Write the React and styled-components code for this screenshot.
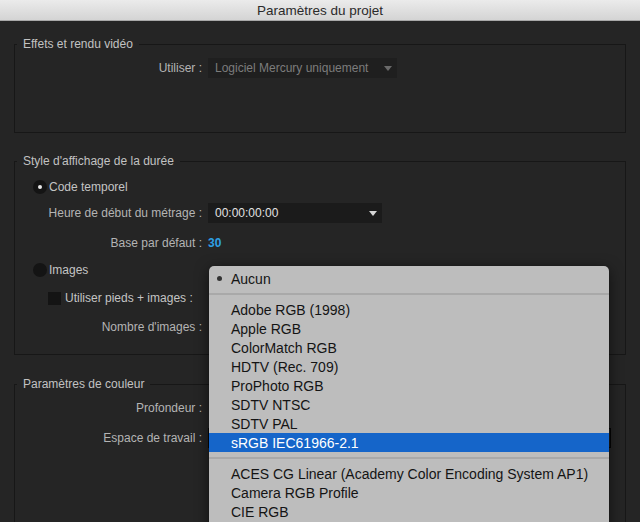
import React from "react";
import styled, { createGlobalStyle } from "styled-components";

const Global = createGlobalStyle`
  html, body { margin: 0; padding: 0; background: #252525; }
  body { font-family: "Liberation Sans", Arial, sans-serif; }
`;

const Page = styled.div`
  position: relative;
  width: 640px;
  height: 522px;
  overflow: hidden;
  background: #252525;
  display: flex;
  flex-direction: column;
`;

const TitleBar = styled.div`
  height: 20px;
  flex: none;
  border-bottom: 1px solid #a8a8a8;
  background: linear-gradient(#ebebeb, #d4d4d4);
  color: #2a2a2a;
  font-size: 13.5px;
  line-height: 21px;
  text-align: center;
`;

const Content = styled.div`
  padding: 16px 14px 0 14px;
  display: flex;
  flex-direction: column;
`;

const Group = styled.fieldset`
  margin: ${(p) => p.$mt || 0}px 0 0 0;
  padding: 0 0 ${(p) => p.$pb || 0}px 0;
  min-width: 0;
  border: 1px solid #171717;
  display: flex;
  flex-direction: column;
`;

const Legend = styled.legend`
  margin-left: 2px;
  padding: 0 6px;
  font-size: 12px;
  line-height: 15px;
  color: #c2c2c2;
`;

const Row = styled.div`
  display: flex;
  align-items: center;
  height: 20px;
  margin-top: ${(p) => p.$mt || 0}px;
  padding-left: ${(p) => p.$indent || 0}px;
  gap: 6px;
`;

const Label = styled.span`
  width: 187px;
  flex: none;
  text-align: right;
  font-size: 12px;
  color: #b4b4b4;
  white-space: nowrap;
`;

const OptionText = styled.span`
  font-size: 12px;
  color: #c4c4c4;
  white-space: nowrap;
`;

const RadioDot = styled.span`
  width: 14px;
  height: 14px;
  border-radius: 50%;
  background: #141414;
  display: flex;
  align-items: center;
  justify-content: center;
  flex: none;
  &::after {
    content: "";
    width: 4px;
    height: 4px;
    border-radius: 50%;
    background: ${(p) => (p.$on ? "#e8e8e8" : "transparent")};
  }
`;

const RadioRow = styled(Row)`
  gap: 2px;
`;

const CheckRow = styled(Row)`
  gap: 4px;
`;

const CheckBox = styled.span`
  width: 13px;
  height: 13px;
  background: #141414;
  flex: none;
`;

const Select = styled.div`
  width: ${(p) => p.$w}px;
  height: 20px;
  box-sizing: border-box;
  background: ${(p) => (p.$disabled ? "#1f1f1f" : "#1b1b1b")};
  border: ${(p) => (p.$focus ? "1px solid #050505" : "none")};
  display: flex;
  align-items: center;
  justify-content: space-between;
  padding: 0 5px 0 7px;
  font-size: 12px;
  color: ${(p) => (p.$disabled ? "#7c7c7c" : "#e2e2e2")};
  white-space: nowrap;
`;

const Arrow = styled.span`
  width: 0;
  height: 0;
  border-left: 4px solid transparent;
  border-right: 4px solid transparent;
  border-top: 5px solid ${(p) => (p.$disabled ? "#6a6a6a" : "#d6d6d6")};
`;

const Value = styled.span`
  font-size: 12px;
  color: #2ea0e4;
  font-weight: bold;
`;

const Menu = styled.div`
  position: absolute;
  left: 209px;
  top: 266px;
  width: 400px;
  height: 280px;
  padding-top: 3px;
  box-sizing: border-box;
  background: #bdbdbd;
  border-radius: 5px 5px 0 0;
  box-shadow: 0 3px 14px rgba(0, 0, 0, 0.55), 0 0 1px rgba(0, 0, 0, 0.5);
  font-family: "Liberation Sans", Arial, sans-serif;
`;

const Item = styled.div`
  position: relative;
  height: 19px;
  line-height: 20px;
  padding-left: 22px;
  font-size: 14px;
  color: ${(p) => (p.$active ? "#ffffff" : "#141414")};
  background: ${(p) => (p.$active ? "#1565c9" : "transparent")};
  white-space: nowrap;
`;

const Bullet = styled.span`
  position: absolute;
  left: 8px;
  top: 7px;
  width: 5px;
  height: 5px;
  border-radius: 50%;
  background: #333;
`;

const Separator = styled.div`
  height: 2px;
  margin: 5px 0;
  background: #a9a9a9;
`;

const group1 = ["Adobe RGB (1998)", "Apple RGB", "ColorMatch RGB", "HDTV (Rec. 709)", "ProPhoto RGB", "SDTV NTSC", "SDTV PAL", "sRGB IEC61966-2.1"];
const group2 = ["ACES CG Linear (Academy Color Encoding System AP1)", "Camera RGB Profile", "CIE RGB"];

export default function App() {
  return (
    <>
      <Global />
      <Page>
        <TitleBar>Paramètres du projet</TitleBar>
        <Content>
          <Group $pb={54}>
            <Legend>Effets et rendu vidéo</Legend>
            <Row $mt={6}>
              <Label>Utiliser :</Label>
              <Select $w={189} $disabled>
                Logiciel Mercury uniquement
                <Arrow $disabled />
              </Select>
            </Row>
          </Group>

          <Group $mt={21} $pb={17}>
            <Legend>Style d'affichage de la durée</Legend>
            <RadioRow $mt={8} $indent={18}>
              <RadioDot $on />
              <OptionText>Code temporel</OptionText>
            </RadioRow>
            <Row $mt={6}>
              <Label>Heure de début du métrage :</Label>
              <Select $w={174}>
                00:00:00:00
                <Arrow />
              </Select>
            </Row>
            <Row $mt={10}>
              <Label>Base par défaut :</Label>
              <Value>30</Value>
            </Row>
            <RadioRow $mt={7} $indent={18}>
              <RadioDot />
              <OptionText>Images</OptionText>
            </RadioRow>
            <CheckRow $mt={8} $indent={33}>
              <CheckBox />
              <OptionText>Utiliser pieds + images :</OptionText>
            </CheckRow>
            <Row $mt={9}>
              <Label>Nombre d'images :</Label>
            </Row>
          </Group>

          <Group $mt={22} $pb={120}>
            <Legend>Paramètres de couleur</Legend>
            <Row $mt={6}>
              <Label>Profondeur :</Label>
            </Row>
            <Row $mt={10}>
              <Label>Espace de travail :</Label>
              <Select $w={403} $focus />
            </Row>
          </Group>
        </Content>

        <Menu>
          <Item>
            <Bullet />
            Aucun
          </Item>
          <Separator />
          {group1.map((t) => (
            <Item key={t} $active={t === "sRGB IEC61966-2.1"}>
              {t}
            </Item>
          ))}
          <Separator />
          {group2.map((t) => (
            <Item key={t}>{t}</Item>
          ))}
        </Menu>
      </Page>
    </>
  );
}
